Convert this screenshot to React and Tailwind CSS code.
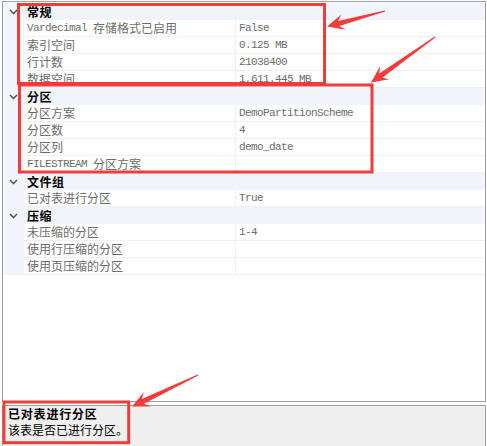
import React from 'react';

const sections = [
  { title: '常规', rows: [['Vardecimal 存储格式已启用', 'False'], ['索引空间', '0.125 MB'], ['行计数', '21038400'], ['数据空间', '1,611.445 MB']] },
  { title: '分区', rows: [['分区方案', 'DemoPartitionScheme'], ['分区数', '4'], ['分区列', 'demo_date'], ['FILESTREAM 分区方案', '']] },
  { title: '文件组', rows: [['已对表进行分区', 'True']] },
  { title: '压缩', rows: [['未压缩的分区', '1-4'], ['使用行压缩的分区', ''], ['使用页压缩的分区', '']] },
];

function Mixed({ text }) {
  const parts = text.match(/[\u3000-\u9fff\uff00-\uffef]+|[^\u3000-\u9fff\uff00-\uffef]+/g) || [];
  return (
    <>
      {parts.map((p, i) =>
        /[\u3000-\u9fff\uff00-\uffef]/.test(p) ? (
          <span key={i} className="[font-family:'Noto_Sans_CJK_SC',sans-serif] text-[12px]">{p}</span>
        ) : (
          <span key={i} className="[font-family:'Liberation_Mono',monospace] text-[11px] tracking-[-0.6px] whitespace-pre">{p}</span>
        )
      )}
    </>
  );
}

function Chevron() {
  return (
    <svg width="9" height="6" viewBox="0 0 9 6" className="block">
      <polyline points="1,1 4.5,4.5 8,1" fill="none" stroke="#4a4a4a" strokeWidth="1.4" />
    </svg>
  );
}

function arrowPoints(x1, y1, x2, y2) {
  const dx = x1 - x2, dy = y1 - y2;
  const L = Math.hypot(dx, dy);
  const ux = dx / L, uy = dy / L;
  const vx = -uy, vy = ux;
  const p = (u, v) => `${(x2 + ux * u + vx * v).toFixed(1)},${(y2 + uy * u + vy * v).toFixed(1)}`;
  const H = 17, B = 8, N = 5, S = 2.6;
  return [p(0, 0), p(H, B), p(H - N, S), p(L, 0.6), p(L, -0.6), p(H - N, -S), p(H, -B)].join(' ');
}

export default function App() {
  return (
    <div className="relative w-[487px] h-[446px] overflow-hidden bg-white">
      <div className="pt-px pl-[2px]">
        <div className="w-[484px] h-[401px] border border-[#a0a0a0] bg-white pt-px">
          {sections.map((s) => (
            <div key={s.title}>
              <div className="flex h-[17px] bg-[#f1f4fa]">
                <div className="w-[21px] shrink-0 flex items-center pl-[6px]">
                  <Chevron />
                </div>
                <div className="pl-[3px] flex items-center leading-[16px] text-[12px] tracking-[0.5px] font-bold text-black [font-family:'Noto_Sans_CJK_SC',sans-serif]">
                  {s.title}
                </div>
              </div>
              {s.rows.map(([n, v]) => (
                <div key={n} className="flex h-[17px]">
                  <div className="w-[21px] shrink-0 bg-[#f1f4fa]" />
                  <div className="w-[212px] shrink-0 h-[17px] border-b border-r border-[#edf0f4] bg-white pl-[3px] flex items-center leading-[16px] text-[#6c6c6c] whitespace-nowrap">
                    <Mixed text={n} />
                  </div>
                  <div className="flex-1 h-[17px] border-b border-[#edf0f4] bg-white pl-[3px] flex items-center leading-[16px] text-[#6c6c6c] whitespace-nowrap">
                    <Mixed text={v} />
                  </div>
                </div>
              ))}
            </div>
          ))}
        </div>
        <div className="mt-[3px] w-[484px] h-[60px] border border-[#a0a0a0] bg-[#efefef] pl-[5px]">
          <div className="leading-[16px] text-[12px] tracking-[0.8px] font-bold text-black [font-family:'Noto_Sans_CJK_SC',sans-serif]">已对表进行分区</div>
          <div className="leading-[16px] text-[12px] text-black [font-family:'Noto_Sans_CJK_SC',sans-serif]">该表是否已进行分区。</div>
        </div>
      </div>

      <svg className="absolute inset-0 pointer-events-none" width="487" height="446" viewBox="0 0 487 446">
        <g fill="none" stroke="#f23b3b" strokeWidth="3">
          <rect x="18.5" y="4.5" width="306" height="79" />
          <rect x="19.5" y="85" width="352.5" height="87" />
          <rect x="4" y="402" width="124.7" height="40.7" />
        </g>
        <g fill="#f23b3b">
          <polygon points={arrowPoints(385, 11, 327, 26.5)} />
          <polygon points={arrowPoints(435, 37, 371, 82.5)} />
          <polygon points={arrowPoints(198, 375, 132, 406.5)} />
        </g>
      </svg>
    </div>
  );
}
